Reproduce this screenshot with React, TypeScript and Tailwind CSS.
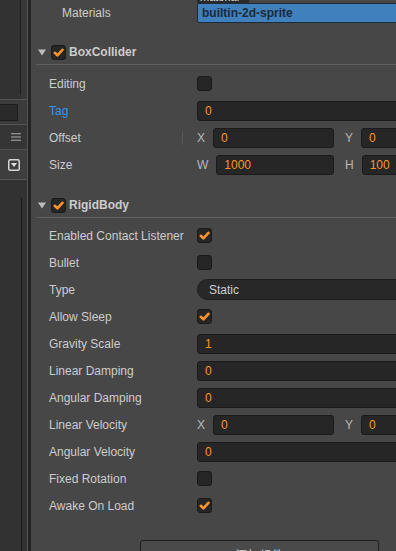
import React from "react";

const ORANGE = "#fd942b";

const Check = ({ on }: { on?: boolean }) => (
	<div className="flex size-[15px] shrink-0 items-center justify-center rounded-[3px] border border-[#1a1a1a] bg-[#262626]">
		{on && (
			<svg width="11" height="11" viewBox="0 0 11 11">
				<path d="M1.8 5.8 L4.4 8.3 L9.4 2.8" fill="none" stroke={ORANGE} strokeWidth="2.6" strokeLinecap="round" strokeLinejoin="round" />
			</svg>
		)}
	</div>
);

const Field = ({ value, className = "" }: { value: string; className?: string }) => (
	<div className={`flex h-[20px] items-center rounded-[3px] border border-[#1b1b1b] bg-[#262626] pl-[7px] text-[#fd942b] ${className}`}>
		{value}
	</div>
);

const Vec = ({ a, b, va, vb }: { a: string; b: string; va: string; vb: string }) => (
	<div className="flex w-[300px] items-center">
		<div className="flex w-[148px] items-center gap-2 pr-[11px]">
			<span className="text-[#b8b8b8]">{a}</span>
			<Field value={va} className="flex-1" />
		</div>
		<div className="flex w-[148px] items-center gap-2 pr-[11px]">
			<span className="text-[#b8b8b8]">{b}</span>
			<Field value={vb} className="flex-1" />
		</div>
	</div>
);

const Row = ({ label, children, blue, handle }: { label: string; children: React.ReactNode; blue?: boolean; handle?: boolean }) => (
	<div className="flex h-[27px] items-center">
		<div className="flex w-[166px] shrink-0 items-center pl-[18px]">
			<span className={`flex-1 ${blue ? "text-[#2e97f2]" : "text-[#cccccc]"}`}>{label}</span>
			{handle && <div className="mr-[14px] h-[14px] w-px bg-[#575757]" />}
		</div>
		<div className="w-[300px] shrink-0">{children}</div>
	</div>
);

const Header = ({ title }: { title: string }) => (
	<div className="ml-[5px] flex h-[26px] items-center border-b border-[#5f5f5f] pt-[1px]">
		<svg className="ml-[2px]" width="8" height="7" viewBox="0 0 8 7">
			<polygon points="0,0.5 8,0.5 4,6.5" fill="#bcbcbc" />
		</svg>
		<div className="ml-[5px]">
			<Check on />
		</div>
		<span className="ml-[3px] font-bold text-[#cccccc]">{title}</span>
	</div>
);

export default function App() {
	return (
		<div
			className="flex h-[551px] w-[396px] overflow-hidden bg-[#474747] text-[12px]"
			style={{ fontFamily: '"Liberation Sans", Arial, "Noto Sans CJK SC", sans-serif' }}
		>
			{/* left dock */}
			<div className="flex w-[28px] shrink-0 flex-col border-r border-[#545454] bg-[#323232]">
				<div className="flex h-[100px] shrink-0 border-b border-[#545454]">
					<div className="mb-[5px] w-[21px] border-r border-[#1f1f1f] bg-[#323232]" />
					<div className="flex-1 bg-[#383838]" />
				</div>
				<div className="flex h-[25px] shrink-0 items-center border-b border-[#545454] bg-[#3b3b3b]">
					<div className="h-[17px] w-[18px] border border-l-0 border-[#1c1c1c] bg-[#2a2a2a]" />
				</div>
				<div className="flex h-[25px] shrink-0 items-center justify-end border-b border-[#4f4f4f] bg-[#353535] pr-[6px]">
					<svg width="10" height="8" viewBox="0 0 10 8">
						<rect x="0" y="0" width="10" height="1.4" fill="#8c8c8c" />
						<rect x="0" y="3.3" width="10" height="1.4" fill="#8c8c8c" />
						<rect x="0" y="6.6" width="10" height="1.4" fill="#8c8c8c" />
					</svg>
				</div>
				<div className="flex h-[30px] shrink-0 items-center border-b border-[#555] bg-[#3e3e3e] pl-[8px]">
					<svg width="12" height="12" viewBox="0 0 12 12">
						<rect x="0.75" y="0.75" width="10.5" height="10.5" rx="1.5" fill="none" stroke="#d6d6d6" strokeWidth="1.5" />
						<polygon points="3,4 9,4 6,8" fill="#e0e0e0" />
					</svg>
				</div>
				<div className="flex flex-1">
					<div className="mt-[18px] w-[22px] border-r border-[#1d1d1d]" />
				</div>
			</div>
			<div className="w-[3px] shrink-0 bg-[#242424]" />

			{/* inspector */}
			<div className="flex min-w-0 flex-1 flex-col">
				<div className="flex h-[26px] items-start">
					<div className="flex h-[26px] w-[166px] shrink-0 items-center pl-[31px] text-[#cccccc]">Materials</div>
					<div className="flex w-[300px] shrink-0 flex-col">
						<div className="h-[3px] w-[52px] overflow-hidden bg-[#2a2a2a] pl-[3px]">
							<div className="-mt-[9px] text-[11px] leading-[12px] text-[#dddddd]">material</div>
						</div>
						<div className="flex h-[20px] items-center rounded-[2px] border border-[#1e2c3a] bg-[#3f80bd] pl-[4px] font-bold text-[#1d2a38]">
							builtin-2d-sprite
						</div>
					</div>
				</div>

				<div className="mt-[13px]">
					<Header title="BoxCollider" />
				</div>
				<div className="pt-[5px]">
					<Row label="Editing">
						<Check />
					</Row>
					<Row label="Tag" blue>
						<Field value="0" />
					</Row>
					<Row label="Offset" handle>
						<Vec a="X" b="Y" va="0" vb="0" />
					</Row>
					<Row label="Size">
						<Vec a="W" b="H" va="1000" vb="100" />
					</Row>
				</div>

				<div className="mt-[14px]">
					<Header title="RigidBody" />
				</div>
				<div className="pt-[4px]">
					<Row label="Enabled Contact Listener">
						<Check on />
					</Row>
					<Row label="Bullet">
						<Check />
					</Row>
					<Row label="Type">
						<div className="flex h-[21px] items-center rounded-full border border-[#1d1d1d] bg-[#282828] pl-[11px] text-[#c9d0d8]">
							Static
						</div>
					</Row>
					<Row label="Allow Sleep">
						<Check on />
					</Row>
					<Row label="Gravity Scale">
						<Field value="1" />
					</Row>
					<Row label="Linear Damping">
						<Field value="0" />
					</Row>
					<Row label="Angular Damping">
						<Field value="0" />
					</Row>
					<Row label="Linear Velocity">
						<Vec a="X" b="Y" va="0" vb="0" />
					</Row>
					<Row label="Angular Velocity">
						<Field value="0" />
					</Row>
					<Row label="Fixed Rotation">
						<Check />
					</Row>
					<Row label="Awake On Load">
						<Check on />
					</Row>
				</div>

				<div className="ml-[109px] mt-[21px] flex h-[30px] w-[239px] shrink-0 items-center justify-center rounded-[3px] border border-[#1f1f1f] bg-[#4a4a4a] pt-[2px] text-[#cccccc]">
					添加组件
				</div>
			</div>
		</div>
	);
}
